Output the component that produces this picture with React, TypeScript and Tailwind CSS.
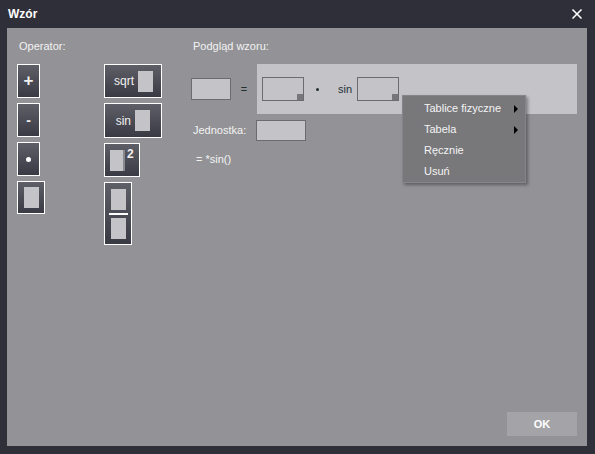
import { X } from 'lucide-react';

const font = { fontFamily: '"Liberation Sans", Arial, sans-serif' };

function Slot({ className = '' }: { className?: string }) {
    return <div className={`bg-[#c4c4c8] ${className}`} />;
}

function OpButton({ className = '', children }: { className?: string; children?: React.ReactNode }) {
    return (
        <button
            className={`flex items-center justify-center border border-white bg-gradient-to-b from-[#5f5f68] to-[#3a3a44] text-[#f0f0f0] ${className}`}
        >
            {children}
        </button>
    );
}

function InputBox({ className = '', corner = false }: { className?: string; corner?: boolean }) {
    return (
        <div className={`relative bg-[#c4c4c8] border border-[#6b6b70] ${className}`}>
            {corner && <div className="absolute right-0 bottom-0 w-[6px] h-[6px] bg-[#77777b]" />}
        </div>
    );
}

export default function App() {
    return (
        <div className="w-[595px] h-[454px] bg-[#2f2f39] flex flex-col select-none" style={font}>
            {/* Pasek tytułu */}
            <div className="h-[28px] flex items-center justify-between pl-[8px] pr-[10px]">
                <span className="text-white font-bold text-[12px]">Wzór</span>
                <X className="w-[16px] h-[16px] text-white" strokeWidth={2.5} />
            </div>

            {/* Panel */}
            <div className="relative ml-[7px] mr-[8px] h-[418px] bg-[#939397] flex flex-col pt-[11px] pl-[10px] pr-[10px] pb-[10px]">
                <div className="flex">
                    {/* Operatory */}
                    <div className="w-[174px] flex flex-col">
                        <div className="pl-[2px] text-[11px] leading-[14px] text-[#f2f2f2]">Operator:</div>
                        <div className="flex mt-[11px]">
                            <div className="w-[87px] flex flex-col gap-[5px]">
                                <OpButton className="w-[23px] h-[34px] text-[17px] font-bold">+</OpButton>
                                <OpButton className="w-[23px] h-[34px] text-[14px] font-bold">-</OpButton>
                                <OpButton className="w-[23px] h-[34px]">
                                    <span className="w-[5px] h-[5px] rounded-full bg-white" />
                                </OpButton>
                                <OpButton className="w-[28px] h-[33px]">
                                    <Slot className="w-[15px] h-[21px]" />
                                </OpButton>
                            </div>
                            <div className="flex flex-col gap-[5px]">
                                <OpButton className="w-[58px] h-[34px] gap-[4px] justify-end pr-[8px] text-[12px]">
                                    <span>sqrt</span>
                                    <Slot className="w-[15px] h-[21px]" />
                                </OpButton>
                                <OpButton className="w-[58px] h-[35px] gap-[4px] justify-end pr-[11px] text-[12px]">
                                    <span>sin</span>
                                    <Slot className="w-[15px] h-[21px]" />
                                </OpButton>
                                <OpButton className="w-[36px] h-[34px] items-start justify-start pl-[5px] pt-[4px]">
                                    <Slot className="w-[15px] h-[21px] mt-[2px] border-r-2 border-[#8a8a8e]" />
                                    <span className="ml-[2px] text-[12px] leading-[12px] font-bold">2</span>
                                </OpButton>
                                <OpButton className="w-[28px] h-[63px] flex-col gap-[3px]">
                                    <Slot className="w-[15px] h-[21px]" />
                                    <div className="w-[19px] h-[2px] bg-white" />
                                    <Slot className="w-[15px] h-[21px]" />
                                </OpButton>
                            </div>
                        </div>
                    </div>

                    {/* Podgląd */}
                    <div className="flex-1 flex flex-col">
                        <div className="pl-[2px] text-[11px] leading-[14px] text-[#f2f2f2]">Podgląd wzoru:</div>
                        <div className="flex items-center mt-[11px] h-[50px]">
                            <InputBox className="w-[40px] h-[22px]" />
                            <span className="w-[26px] text-center text-[11px] text-[#1f3035]">=</span>
                            <div className="flex-1 h-[50px] bg-[#c4c4c8] flex items-center pl-[5px]">
                                <InputBox className="w-[42px] h-[24px]" corner />
                                <span className="ml-[12px] w-[3px] h-[3px] rounded-full bg-[#1f3035]" />
                                <span className="ml-[19px] text-[11px] text-[#1f3035]">sin</span>
                                <InputBox className="ml-[5px] w-[42px] h-[24px]" corner />
                            </div>
                        </div>
                        <div className="flex items-center mt-[6px]">
                            <span className="pl-[2px] w-[65px] text-[11px] text-[#f2f2f2]">Jednostka:</span>
                            <InputBox className="w-[50px] h-[21px]" />
                        </div>
                        <div className="mt-[10px] pl-[5px] text-[11px] text-[#f2f2f2]">= *sin()</div>
                    </div>
                </div>

                <div className="flex-1" />
                <div className="flex justify-end">
                    <button className="w-[70px] h-[24px] bg-[#a4a4a8] text-white font-bold text-[11px]">OK</button>
                </div>

                {/* Menu kontekstowe */}
                <div className="absolute left-[395px] top-[67px] w-[124px] h-[88px] bg-[#78787b] shadow-[2px_2px_3px_rgba(0,0,0,0.35)] border border-[#86868a] flex flex-col pt-[2px]">
                    {['Tablice fizyczne', 'Tabela', 'Ręcznie', 'Usuń'].map((item, i) => (
                        <div key={item} className="h-[22px] flex items-center pl-[21px] pr-[7px] text-[11px] text-[#f4f4f4]">
                            <span className="flex-1">{item}</span>
                            {i < 2 && (
                                <span className="w-0 h-0 border-y-[4px] border-y-transparent border-l-[4px] border-l-black" />
                            )}
                        </div>
                    ))}
                </div>
            </div>
        </div>
    );
}
